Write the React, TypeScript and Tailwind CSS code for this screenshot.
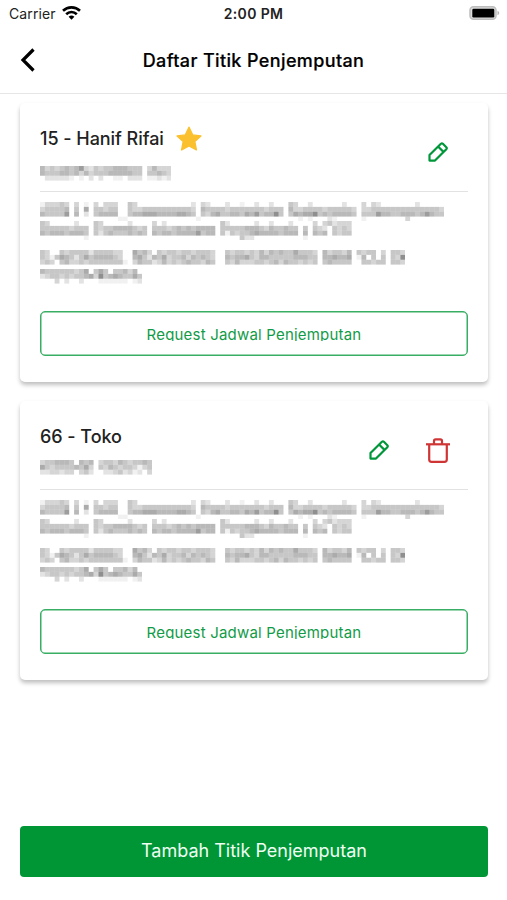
import clsx from 'clsx';

type Point = {
  id: number;
  name: string;
  primary: boolean;
  phone: string[];
};

const CELL = 4.87;

// Masked values are stored as rows of shade levels (0-9), one character per mosaic cell.
const ADDRESS_LINE_1 = [
  '133343 3 1 30333  43000000000002 32000200100200200 43002000000200 30320000000200000',
  '344445 4 6 44344  43344444444443 54444344444443444 53344443444443 33444444444444443',
  '544447 5 2 45555  45566655556654 43564455465745584 46566845455554 44475544555457544',
  '0000000000000000110000000000000010000000000000000000010100021000001000000003000000',
];

const ADDRESS_LINE_2 = [
  '4300000200 43000002000 3020000000000 4200000200200020 0 30342333',
  '4444443444 43445555434 4443454545555 4444455543544544 4 43204343',
  '5455545554 42454445454 5455455557455 4143445655554555 5 54504344',
  '0000000001 00000000000 0000000000000 0000422000000000 1 00000000',
];

const ADDRESS_LINE_3 = [
  '430 43444424444330 645304344344344430 4344343535454464443 534435 4344 3 443',
  '431465424645555430 564254634453545430 5455643554444455544 556556 15 4 4 438',
  '343 45334344444441 354423534345443540 4353334434535443434 454444  44344 443',
];

const ADDRESS_LINE_4 = [
  '544444434604640445350',
  '234434344563845654464',
  '000302002000111111012',
];

const POINTS: Point[] = [
  {
    id: 15,
    name: 'Hanif Rifai',
    primary: true,
    phone: [
      '534345457324344555444035333',
      '544455453534445555544044543',
      '022222101020200110222011212',
    ],
  },
  {
    id: 66,
    name: 'Toko',
    primary: false,
    phone: [
      '34455540545034435434454',
      '64344445463043543443134',
      '22332330342002234231203',
    ],
  },
];

function Mosaic({ rows, className }: { rows: string[]; className?: string }) {
  const columns = Math.max(...rows.map((row) => row.length));
  return (
    <svg
      width={columns * CELL}
      height={rows.length * CELL}
      className={clsx('block shrink-0 blur-[0.3px]', className)}
      aria-hidden="true"
    >
      {rows.map((row, y) =>
        row.split('').map((level, x) => {
          const shade = Number(level) || 0;
          if (shade === 0) return null;
          return (
            <rect
              key={`${x}-${y}`}
              x={x * CELL}
              y={y * CELL}
              width={CELL}
              height={CELL}
              fill="#000"
              fillOpacity={shade * 0.055}
            />
          );
        }),
      )}
    </svg>
  );
}

function PencilIcon() {
  return (
    <svg width="20" height="20" viewBox="0 0 20 20" fill="none" stroke="#00963a" strokeWidth="2.2" strokeLinejoin="round">
      <path d="M1.5 18.6V13L12.900 1.800q1-.9 2 0L18.300 5.200q.9 1 0 2L7 18.600Z" />
      <path d="m10.300 4.700 5.200 5.200" />
    </svg>
  );
}

function TrashIcon() {
  return (
    <svg width="24" height="25" viewBox="0 0 24 25" fill="none" stroke="#d03535" strokeWidth="2.2" strokeLinejoin="round">
      <path d="M0 6.300h24" />
      <path d="M3.200 6.300v15.200q0 2.300 2.300 2.300h13q2.300 0 2.300-2.300V6.300" />
      <path d="M8 6V3q0-1.700 1.700-1.700h4.600Q16 1.300 16 3v3" />
    </svg>
  );
}

function StarIcon() {
  return (
    <svg width="26" height="25" viewBox="0 0 26 25" fill="#fbc02d" stroke="#fbc02d" strokeWidth="1.4" strokeLinejoin="round">
      <path d="m13 1.200 3.600 7.700 8.300 1-6.100 5.700 1.600 8.300-7.400-4.100-7.400 4.100 1.600-8.300L1.100 9.900l8.300-1Z" />
    </svg>
  );
}

function StatusBar() {
  return (
    <div className="flex h-[27px] items-center px-[9px] text-[14px] leading-none text-[#222]">
      <div className="flex flex-1 items-center gap-[6px]">
        <span className="tracking-[0.1px]">Carrier</span>
        <svg width="19" height="14" viewBox="0 0 19 14" fill="none" stroke="#000" strokeWidth="2.6" className="relative -top-px">
          <path d="M1 4.800a12.200 12.200 0 0 1 17 0" />
          <path d="M4.200 8.200a7.600 7.600 0 0 1 10.600 0" />
          <path d="M9.500 13.800 6.600 10.800a4.200 4.200 0 0 1 5.800 0Z" fill="#000" stroke="none" />
        </svg>
      </div>
      <span className="text-[14px] font-semibold tracking-[0.35px]">2:00 PM</span>
      <div className="flex flex-1 justify-end">
        <svg width="31" height="14" viewBox="0 0 31 14" className="relative -top-[0.500px] -mr-[2px]">
          <rect x="1" y="0.800" width="26" height="12.400" rx="3.500" fill="#ddd" stroke="#bdbdbd" strokeWidth="1.500" />
          <rect x="3.300" y="2.800" width="22" height="8.600" rx="1.200" fill="#000" />
          <path d="M28.500 4.800v4.400q1.800-.8 1.800-2.200t-1.800-2.200Z" fill="#b5b5b5" />
        </svg>
      </div>
    </div>
  );
}

function PointCard({ point }: { point: Point }) {
  return (
    <article className="h-[279px] rounded-[5px] bg-white px-5 shadow-[0_3px_4px_rgba(0,0,0,0.25)]">
      <div className="flex h-[89px] items-start justify-between border-b border-[#e2e2e2]">
        <div className="pt-[22px]">
          <div className="flex h-[27px] items-center gap-3">
            <h2 className="text-[18px] font-medium tracking-[-0.05px] text-[#222]">
              {point.id} - {point.name}
            </h2>
            {point.primary ? <StarIcon /> : null}
          </div>
          <Mosaic rows={point.phone} className={point.primary ? 'mt-[14px]' : 'mt-[10px]'} />
        </div>
        <div className={clsx('flex h-[98px] items-center gap-[37px]', point.primary ? 'pr-[20px]' : 'pr-[18px]')}>
          <button type="button" aria-label="Edit">
            <PencilIcon />
          </button>
          {point.primary ? null : (
            <button type="button" aria-label="Hapus">
              <TrashIcon />
            </button>
          )}
        </div>
      </div>

      <div className="flex h-[119px] flex-col pt-[9.500px]">
        <Mosaic rows={ADDRESS_LINE_1} />
        <Mosaic rows={ADDRESS_LINE_2} />
        <Mosaic rows={ADDRESS_LINE_3} className="mt-[9.500px]" />
        <Mosaic rows={ADDRESS_LINE_4} className="mt-[4.700px]" />
      </div>

      <button
        type="button"
        className="flex h-[45px] w-full justify-center rounded-[5px] border border-[#38ad64] pt-[13px] text-[15px] text-[#129b47] shadow-[inset_0_0_0_0.500px_#38ad64]"
      >
        <span className="block h-[16px] overflow-hidden leading-[20px] tracking-[0.2px]">Request Jadwal Penjemputan</span>
      </button>
    </article>
  );
}

export default function App() {
  return (
    <div className="flex h-[900px] w-[507px] flex-col overflow-hidden bg-white font-['Inter','Liberation_Sans',sans-serif]">
      <StatusBar />
      <header className="flex h-[67px] items-center border-b border-[#e6e6e6] px-5">
        <button type="button" aria-label="Kembali" className="w-10">
          <svg width="16" height="24" viewBox="0 0 16 24" fill="none" stroke="#000" strokeWidth="3.200">
            <path d="M13.500 1.500 3 12l10.500 10.500" />
          </svg>
        </button>
        <h1 className="flex-1 text-center text-[18px] font-medium tracking-[0.38px] text-black [-webkit-text-stroke:0.2px_black]">
          Daftar Titik Penjemputan
        </h1>
        <div className="w-10" />
      </header>

      <main className="flex flex-1 flex-col gap-[19px] px-[20px] pt-[9px] pr-[19px]">
        {POINTS.map((point) => (
          <PointCard key={point.id} point={point} />
        ))}
      </main>

      <footer className="pr-[19px] pb-[23px] pl-[20px]">
        <button type="button" className="h-[51px] w-full rounded-[4px] bg-[#009635] pb-[2px] text-[18px] text-[#effff3]">
          Tambah Titik Penjemputan
        </button>
      </footer>
    </div>
  );
}
